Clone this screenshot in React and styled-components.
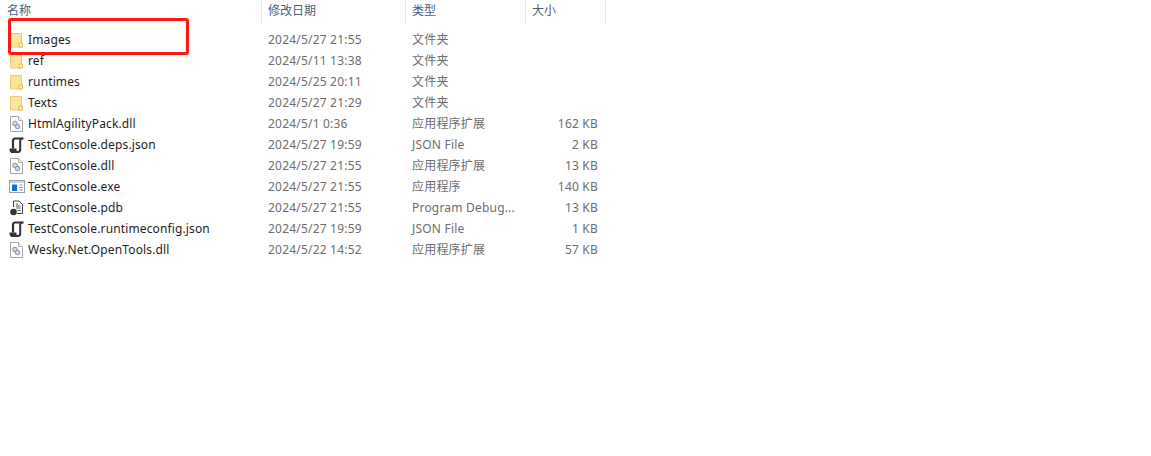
import React from "react"
import styled, { createGlobalStyle } from "styled-components"

const GlobalStyle = createGlobalStyle`
  html, body {
    margin: 0;
    padding: 0;
    background: #fff;
  }
  body {
    font-family: "Noto Sans", "Noto Sans CJK SC", sans-serif;
    font-size: 12px;
  }
`

const Page = styled.div`
  position: relative;
  width: 1151px;
  height: 456px;
  overflow: hidden;
  background: #fff;
`

const columns = "262px 144px 120px 80px"

const Header = styled.div`
  display: grid;
  grid-template-columns: ${columns};
  width: 606px;
  height: 23px;
  margin-bottom: 6px;
`

const HeaderCell = styled.div`
  padding: 0 0 1px 6px;
  border-right: 1px solid #e5e5e5;
  color: #4c607a;
  line-height: 20px;
  padding-top: 1px;
  font-size: 12px;
  white-space: nowrap;
  &:first-child {
    padding-left: 7px;
  }
`

const Row = styled.div`
  display: grid;
  grid-template-columns: ${columns};
  width: 606px;
  height: 21px;
  align-items: center;
  line-height: 21px;
`

const NameCell = styled.div`
  display: flex;
  align-items: center;
  gap: 5px;
  padding-left: 10px;
  color: #1e1e1e;
  letter-spacing: 0.13px;
  white-space: nowrap;
`

const IconSlot = styled.span`
  display: flex;
  width: 13px;
  height: 16px;
  flex: none;
  align-items: center;
  justify-content: center;
  svg {
    flex: none;
  }
`

const InfoCell = styled.div`
  padding-left: 6px;
  color: #6d6d6d;
  letter-spacing: 0.2px;
  white-space: nowrap;
`

const SizeCell = styled.div`
  padding-right: 8px;
  color: #6d6d6d;
  letter-spacing: 0.2px;
  text-align: right;
  white-space: nowrap;
`

const Highlight = styled.div`
  position: absolute;
  left: 8px;
  top: 18px;
  width: 181px;
  height: 37px;
  box-sizing: border-box;
  border: 3px solid #fb1a10;
  border-radius: 3px;
`

const FolderIcon = () => (
  <svg width="13" height="16" viewBox="0 0 13 16">
    <path d="M.5 1.500h11v13.500H.5z" fill="#fde49a" stroke="#eccb6e" />
    <path d="M9 15v-4h3.500v4z" fill="#fff1c0" stroke="#e3bb55" />
  </svg>
)

const DllIcon = () => (
  <svg width="13" height="16" viewBox="0 0 13 16">
    <path d="M.5.5h8l4 4v11H.5z" fill="#fff" stroke="#a3a3a3" />
    <path d="M8.500.5v4h4" fill="#eee" stroke="#b0b0b0" />
    <circle cx="5" cy="7.500" r="2.300" fill="#d8d8d8" stroke="#8d8d8d" />
    <circle cx="7.500" cy="10.500" r="2.300" fill="#c7d5e4" stroke="#8895a3" />
  </svg>
)

const ScriptIcon = () => (
  <svg width="15" height="16" viewBox="0 0 15 16">
    <path d="M6 1.500h8.500M6 1.500C4.500 1.500 4 2.500 4 4v7.500" fill="none" stroke="#333" strokeWidth="2.200" />
    <path d="M13.500 1.500c-1.500 0-2.300 1-2.300 2.500v8.500c0 1.500-1 2.500-2.500 2.500H2" fill="none" stroke="#333" strokeWidth="2" />
    <path d="M.5 11.500h7v1.500c0 1 .4 1.500 1 2.500H2.500C1 15.500.5 14 .5 11.500z" fill="#333" />
  </svg>
)

const ExeIcon = () => (
  <svg width="16" height="13" viewBox="0 0 16 13">
    <rect x=".5" y=".5" width="15" height="12" fill="#fff" stroke="#9a9ea5" />
    <path d="M1 1h14v2H1z" fill="#cfd3d8" />
    <path d="M3 4.500h5v6.500H3z" fill="#0f6fd6" />
    <path d="M10 5h4M10 7.500h4M10 10h4" stroke="#9a9ea5" />
  </svg>
)

const PdbIcon = () => (
  <svg width="13" height="16" viewBox="0 0 13 16">
    <path d="M3.500 7V1h5.500l3.500 3.500V13.500H7" fill="#fff" stroke="#444" />
    <path d="M6 6h4.500M6 8h4.500M7.500 10.500h3M6 4h2" stroke="#555" />
    <circle cx="3.500" cy="12" r="3.300" fill="#333" />
  </svg>
)

const icons = {
  folder: <FolderIcon />,
  dll: <DllIcon />,
  script: <ScriptIcon />,
  exe: <ExeIcon />,
  pdb: <PdbIcon />,
}

const files = [
  { name: "Images", date: "2024/5/27 21:55", type: "文件夹", icon: "folder" },
  { name: "ref", date: "2024/5/11 13:38", type: "文件夹", icon: "folder" },
  { name: "runtimes", date: "2024/5/25 20:11", type: "文件夹", icon: "folder" },
  { name: "Texts", date: "2024/5/27 21:29", type: "文件夹", icon: "folder" },
  { name: "HtmlAgilityPack.dll", date: "2024/5/1 0:36", type: "应用程序扩展", size: "162 KB", icon: "dll" },
  { name: "TestConsole.deps.json", date: "2024/5/27 19:59", type: "JSON File", size: "2 KB", icon: "script" },
  { name: "TestConsole.dll", date: "2024/5/27 21:55", type: "应用程序扩展", size: "13 KB", icon: "dll" },
  { name: "TestConsole.exe", date: "2024/5/27 21:55", type: "应用程序", size: "140 KB", icon: "exe" },
  { name: "TestConsole.pdb", date: "2024/5/27 21:55", type: "Program Debug...", size: "13 KB", icon: "pdb" },
  { name: "TestConsole.runtimeconfig.json", date: "2024/5/27 19:59", type: "JSON File", size: "1 KB", icon: "script" },
  { name: "Wesky.Net.OpenTools.dll", date: "2024/5/22 14:52", type: "应用程序扩展", size: "57 KB", icon: "dll" },
]

const App = () => (
  <Page>
    <GlobalStyle />
    <Header>
      <HeaderCell>名称</HeaderCell>
      <HeaderCell>修改日期</HeaderCell>
      <HeaderCell>类型</HeaderCell>
      <HeaderCell>大小</HeaderCell>
    </Header>
    {files.map(file => (
      <Row key={file.name}>
        <NameCell>
          <IconSlot>{icons[file.icon]}</IconSlot>
          {file.name}
        </NameCell>
        <InfoCell>{file.date}</InfoCell>
        <InfoCell>{file.type}</InfoCell>
        <SizeCell>{file.size}</SizeCell>
      </Row>
    ))}
    <Highlight />
  </Page>
)

export default App
